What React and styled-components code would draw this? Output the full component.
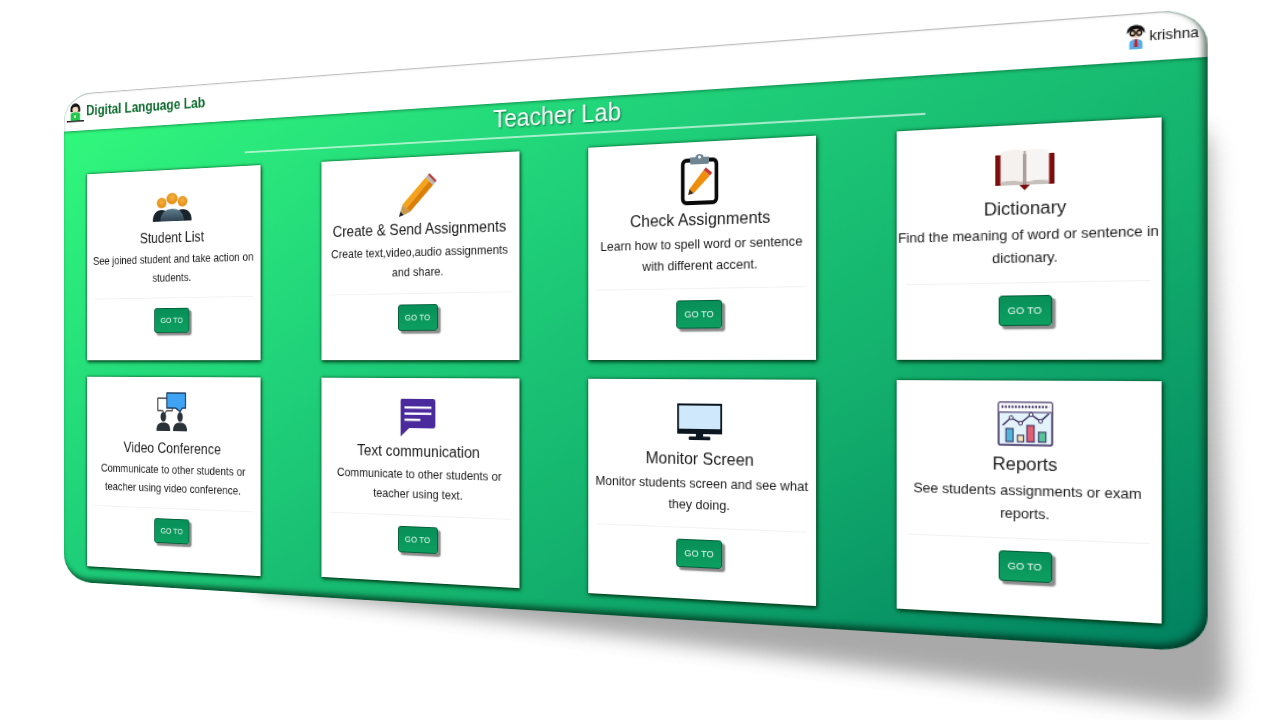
import React from 'react'
import styled, { createGlobalStyle } from 'styled-components';

const GlobalStyle = createGlobalStyle`
html, body {
  margin: 0;
  padding: 0;
  width: 1280px;
  height: 720px;
  overflow: hidden;
  background: #ffffff;
  font-family: "Liberation Sans", Arial, sans-serif;
}
`;

const Page = styled.div`
width: 1280px;
height: 720px;
overflow: hidden;
padding-top: 51px;
box-sizing: border-box;
`;

// whole dashboard is tilted, the layout inside stays flat
const Tilt = styled.div`
position: relative;
width: 1205px;
height: 566px;
margin-left: -50.7px;
transform-origin: 690.7px 311px;
transform: perspective(1027px) rotateY(-14.07deg);
`;

const DropShadow = styled.div`
position: absolute;
left: 240px;
right: -18px;
top: 100px;
bottom: -52px;
background: #a9a9a9;
border-radius: 26px;
filter: blur(10px);
transform-origin: 100% 100%;
transform: skew(2deg, 3.3deg);
`;

const Panel = styled.div`
position: relative;
height: 100%;
border-radius: 38px / 32px;
overflow: hidden;
background: linear-gradient(148deg, #33fb7d 0%, #20d27a 38%, #13b06d 68%, #018060 100%);
filter: blur(0.3px);

&::after{
  content: "";
  position: absolute;
  inset: 0;
  border-radius: 38px / 32px;
  box-shadow: inset -3px -4px 6px rgba(0, 30, 15, 0.7), inset 0 1px 1px rgba(0, 0, 0, 0.25);
  pointer-events: none;
}
`;

const Header = styled.div`
display: flex;
align-items: center;
justify-content: space-between;
height: 43px;
padding: 0 7px 2px 4px;
box-sizing: border-box;
background: #ffffff;
box-shadow: 0 1px 3px rgba(0, 60, 30, 0.5);
`;

const Brand = styled.div`
display: flex;
align-items: center;
gap: 3px;
color: #0b6b2c;
font-size: 15.7px;
font-weight: 700;
`;

const User = styled.div`
display: flex;
align-items: center;
gap: 2px;
color: #111111;
font-size: 12.4px;
`;

const PageTitle = styled.h1`
margin: 2px 0 5px;
color: #ffffff;
font-size: 25px;
line-height: 28px;
font-weight: 400;
text-align: center;
text-shadow: 1px 1px 2px rgba(0, 70, 40, 0.7);
`;

const TitleRule = styled.div`
width: 726px;
height: 2px;
margin: 0 auto 14px;
background: rgba(255, 255, 255, 0.6);
`;

const Cards = styled.div`
display: grid;
grid-template-columns: repeat(4, 228px);
justify-content: space-between;
align-items: start;
row-gap: 19.5px;
padding: 0 37.5px 0 32px;
`;

const Card = styled.div`
background: #ffffff;
box-shadow: 0 0 3px rgba(0, 60, 25, 0.8), 1px 2px 4px rgba(0, 50, 20, 0.9);
text-align: center;
`;

const IconSlot = styled.div`
display: flex;
align-items: flex-end;
justify-content: center;
box-sizing: border-box;
height: ${props => props.$height}px;
padding-bottom: ${props => props.$lift}px;
`;

const CardTitle = styled.div`
height: 22px;
color: #1a1a1a;
font-size: 16px;
line-height: 22px;
`;

const CardText = styled.div`
margin-top: 2.5px;
padding-bottom: 11.5px;
color: #1a1a1a;
font-size: 12.6px;
line-height: 21px;
`;

const Divider = styled.div`
height: 1px;
margin: 0 9px;
background: rgba(0, 0, 0, 0.05);
`;

const CardFooter = styled.div`
display: flex;
justify-content: center;
padding: 10.5px 0 31px;
`;

const GoButton = styled.div`
width: 46px;
height: 28px;
box-sizing: border-box;
border: 1px solid #04603a;
border-radius: 3px;
background: linear-gradient(#078f58, #0c9f60);
box-shadow: 3px 3px 1.5px #8a8a8a;
color: #f0faf5;
font-size: 9.2px;
line-height: 26px;
`;

const StudentLogo = () => (
  <svg width="24" height="24" viewBox="0 0 26 24" preserveAspectRatio="none">
    <path d="M6 12 C3 -1 23 -1 20 12 Z" fill="#141414" />
    <ellipse cx="13" cy="9.5" rx="4.5" ry="3.4" fill="#f4d9c0" />
    <path d="M6 22 V15 C6 13 9 12.5 13 12.5 C17 12.5 20 13 20 15 V22 Z" fill="#23c94f" />
    <rect x="11" y="16" width="3" height="3" fill="#d8f7d8" />
    <rect x="0" y="22" width="26" height="1.6" fill="#222222" />
  </svg>
);

const UserAvatar = () => (
  <svg width="18" height="22" viewBox="0 0 20 22" preserveAspectRatio="none">
    <path d="M2 8 C0 -2 20 -2 18 8 L15 5 H5 Z" fill="#111111" />
    <ellipse cx="10" cy="8" rx="5.5" ry="4" fill="#f0cdb0" />
    <circle cx="7" cy="7.5" r="2.2" fill="none" stroke="#111111" strokeWidth="1.4" />
    <circle cx="13" cy="7.5" r="2.2" fill="none" stroke="#111111" strokeWidth="1.4" />
    <path d="M4 22 V17 C4 14 7 13 10 13 C13 13 16 14 16 17 V22 Z" fill="#59aee8" />
    <path d="M9 13 H11 L11.8 20 H8.2 Z" fill="#c4242c" />
  </svg>
);

const PeopleIcon = () => (
  <svg width="51" height="32" viewBox="0 0 56 32" preserveAspectRatio="none">
    <defs>
      <radialGradient id="peopleHead" cx="50%" cy="40%" r="60%">
        <stop offset="0%" stopColor="#f4b144" />
        <stop offset="100%" stopColor="#e38b0c" />
      </radialGradient>
      <linearGradient id="peopleBody" x1="0" y1="0" x2="0" y2="1">
        <stop offset="0%" stopColor="#5f7f90" />
        <stop offset="100%" stopColor="#2f4250" />
      </linearGradient>
    </defs>
    <ellipse cx="13" cy="11" rx="7" ry="6" fill="url(#peopleHead)" />
    <ellipse cx="43" cy="10" rx="7" ry="6" fill="url(#peopleHead)" />
    <ellipse cx="28" cy="6.5" rx="8" ry="6.5" fill="url(#peopleHead)" />
    <path d="M0 32 C0 23 5 19 13 19 C20 19 25 23 25 32 Z" fill="#1a242c" />
    <path d="M31 32 C31 23 36 19 43 19 C51 19 56 23 56 32 Z" fill="#1a242c" />
    <path d="M11 32 C11 22 19 18 28 18 C37 18 45 22 45 32 Z" fill="url(#peopleBody)" />
  </svg>
);

const PencilIcon = () => (
  <svg width="45" height="46" viewBox="0 0 49 46" preserveAspectRatio="none">
    <path d="M1 45 L3 39 L7.5 43 Z" fill="#2a2a2a" />
    <path d="M3 39 L6 31.5 L15 40 L7.5 43 Z" fill="#c99a4e" />
    <path d="M6 31.5 L35 4 L39 8 L10.5 36 Z" fill="#f6a31c" />
    <path d="M10.5 36 L39 8 L44 12.5 L15 40 Z" fill="#dc7f08" />
    <path d="M35 4 L37.5 1.5 L46.5 10 L44 12.5 Z" fill="#b5b5b5" />
    <path d="M37.5 1.5 L39.5 0 L48.5 8 L46.5 10 Z" fill="#b8403c" />
  </svg>
);

const ClipboardIcon = () => (
  <svg width="41" height="51" viewBox="0 0 45 51" preserveAspectRatio="none">
    <rect x="4" y="7" width="37" height="42" rx="4" fill="#ffffff" stroke="#0a0a0a" strokeWidth="4" />
    <path d="M12 4 H18 C18 0 27 0 27 4 H33 V9 C33 11 31 11 31 11 H14 C14 11 12 11 12 9 Z" fill="#6f8592" />
    <circle cx="22.5" cy="4" r="1.6" fill="#ffffff" />
    <path d="M10 41 L11.5 35 L16 39.5 Z" fill="#3a2a10" />
    <path d="M11.5 35 L27 17 L34 22.5 L16 39.5 Z" fill="#ee8e0c" />
    <path d="M27 17 L29.5 14.5 L36.5 20 L34 22.5 Z" fill="#c43a38" />
  </svg>
);

const BookIcon = () => (
  <svg width="51" height="38" viewBox="0 0 56 38" preserveAspectRatio="none">
    <path d="M0 5 H56 V33 H33 L28 38 L23 33 H0 Z" fill="#7d0d0d" />
    <path d="M5 3 C12 0 22 0 27 2 V31 C22 30 12 29 5 31 Z" fill="#f4f1ef" />
    <path d="M51 3 C44 0 34 0 29 2 V31 C34 30 44 29 51 31 Z" fill="#f7f5f3" />
    <path d="M5 30 C12 28 22 29 27 31 V33 H5 Z" fill="#c7c1bd" />
    <path d="M51 30 C44 28 34 29 29 31 V33 H51 Z" fill="#c7c1bd" />
    <rect x="27" y="2" width="2" height="31" fill="#a9a39f" />
  </svg>
);

const ConferenceIcon = () => (
  <svg width="42" height="45" viewBox="0 0 46 45" preserveAspectRatio="none">
    <path d="M3 8 H24 V22 H16 L12 26 L10 22 H3 Z" fill="#ffffff" stroke="#333333" strokeWidth="1.4" strokeLinejoin="round" />
    <path d="M16 2 H43 V19 H38 L35 23 L29 19 H16 Z" fill="#3da3f2" stroke="#1c3d5c" strokeWidth="1.6" strokeLinejoin="round" />
    <ellipse cx="11" cy="29" rx="4" ry="5.5" fill="#2b333a" />
    <path d="M1 45 C1 37 5 35.5 11 35.5 C17 35.5 21 37 21 45 Z" fill="#2b333a" />
    <ellipse cx="35" cy="29" rx="4" ry="5.5" fill="#2b333a" />
    <path d="M25 45 C25 37 29 35.5 35 35.5 C41 35.5 45 37 45 45 Z" fill="#2b333a" />
  </svg>
);

const MessageIcon = () => (
  <svg width="41" height="40" viewBox="0 0 45 40" preserveAspectRatio="none">
    <path d="M3 0 H42 C44 0 45 1 45 3 V28 C45 30 44 31 42 31 H12 L1 40 V3 C1 1 1 0 3 0 Z" fill="#4a2a9c" />
    <rect x="6" y="8" width="34" height="2.4" fill="#ffffff" />
    <rect x="6" y="14.5" width="34" height="2.4" fill="#ffffff" />
    <rect x="6" y="21" width="20" height="2.4" fill="#ffffff" />
  </svg>
);

const MonitorIcon = () => (
  <svg width="45" height="36" viewBox="0 0 50 36" preserveAspectRatio="none">
    <rect x="1" y="1" width="48" height="28" fill="#cfe8fb" stroke="#0c1620" strokeWidth="2" />
    <rect x="1" y="25" width="48" height="4" fill="#0c1620" />
    <rect x="21" y="29" width="8" height="4" fill="#0c1620" />
    <rect x="13" y="32.5" width="24" height="3.5" rx="1" fill="#0c1620" />
  </svg>
);

const ReportIcon = () => (
  <svg width="48" height="41" viewBox="0 0 53 41" preserveAspectRatio="none">
    <rect x="1" y="1" width="51" height="39" rx="1.5" fill="#e3f3fb" stroke="#3a2a5e" strokeWidth="1.6" />
    <rect x="1.5" y="1.5" width="50" height="8" fill="#ffffff" />
    <line x1="4" y1="5" x2="49" y2="5" stroke="#3a2a5e" strokeWidth="2.4" strokeDasharray="1.6 1.6" />
    <line x1="2" y1="10" x2="51" y2="10" stroke="#3a2a5e" strokeWidth="1.2" />
    <path d="M5 22 L13 15 L22 20 L32 12 L41 18 L49 11" fill="none" stroke="#3a2a5e" strokeWidth="1.4" />
    <circle cx="13" cy="15" r="1.8" fill="#ffffff" stroke="#3a2a5e" />
    <circle cx="22" cy="20" r="1.8" fill="#ffffff" stroke="#3a2a5e" />
    <circle cx="32" cy="12" r="1.8" fill="#ffffff" stroke="#3a2a5e" />
    <circle cx="41" cy="18" r="1.8" fill="#ffffff" stroke="#3a2a5e" />
    <rect x="8" y="25" width="7" height="12" fill="#4fb4d8" stroke="#3a2a5e" />
    <rect x="19" y="31" width="6" height="6" fill="#f6e4b4" stroke="#3a2a5e" />
    <rect x="28" y="22" width="7" height="15" fill="#df5f74" stroke="#3a2a5e" />
    <rect x="39" y="28" width="7" height="9" fill="#58c29a" stroke="#3a2a5e" />
  </svg>
);

const items = [
  { title: 'Student List', text: 'See joined student and take action on students.', Icon: PeopleIcon, slot: 66, lift: 8 },
  { title: 'Create & Send Assignments', text: 'Create text,video,audio assignments and share.', Icon: PencilIcon, slot: 66, lift: 2 },
  { title: 'Check Assignments', text: 'Learn how to spell word or sentence with different accent.', Icon: ClipboardIcon, slot: 66, lift: 4 },
  { title: 'Dictionary', text: 'Find the meaning of word or sentence in dictionary.', Icon: BookIcon, slot: 66, lift: 6 },
  { title: 'Video Conference', text: 'Communicate to other students or teacher using video conference.', Icon: ConferenceIcon, slot: 70, lift: 9 },
  { title: 'Text communication', text: 'Communicate to other students or teacher using text.', Icon: MessageIcon, slot: 67, lift: 5 },
  { title: 'Monitor Screen', text: 'Monitor students screen and see what they doing.', Icon: MonitorIcon, slot: 68, lift: 8 },
  { title: 'Reports', text: 'See students assignments or exam reports.', Icon: ReportIcon, slot: 66, lift: 6 },
];

const App = () => {
  return (
    <Page>
      <GlobalStyle />
      <Tilt>
        <DropShadow />
        <Panel>
          <Header>
            <Brand><StudentLogo /> Digital Language Lab</Brand>
            <User><UserAvatar /> krishna</User>
          </Header>
          <PageTitle>Teacher Lab</PageTitle>
          <TitleRule />
          <Cards>
            {items.map(({ title, text, Icon, slot, lift }) => (
              <Card key={title}>
                <IconSlot $height={slot} $lift={lift}><Icon /></IconSlot>
                <CardTitle>{title}</CardTitle>
                <CardText>{text}</CardText>
                <Divider />
                <CardFooter><GoButton>GO TO</GoButton></CardFooter>
              </Card>
            ))}
          </Cards>
        </Panel>
      </Tilt>
    </Page>
  )
}

export default App;
